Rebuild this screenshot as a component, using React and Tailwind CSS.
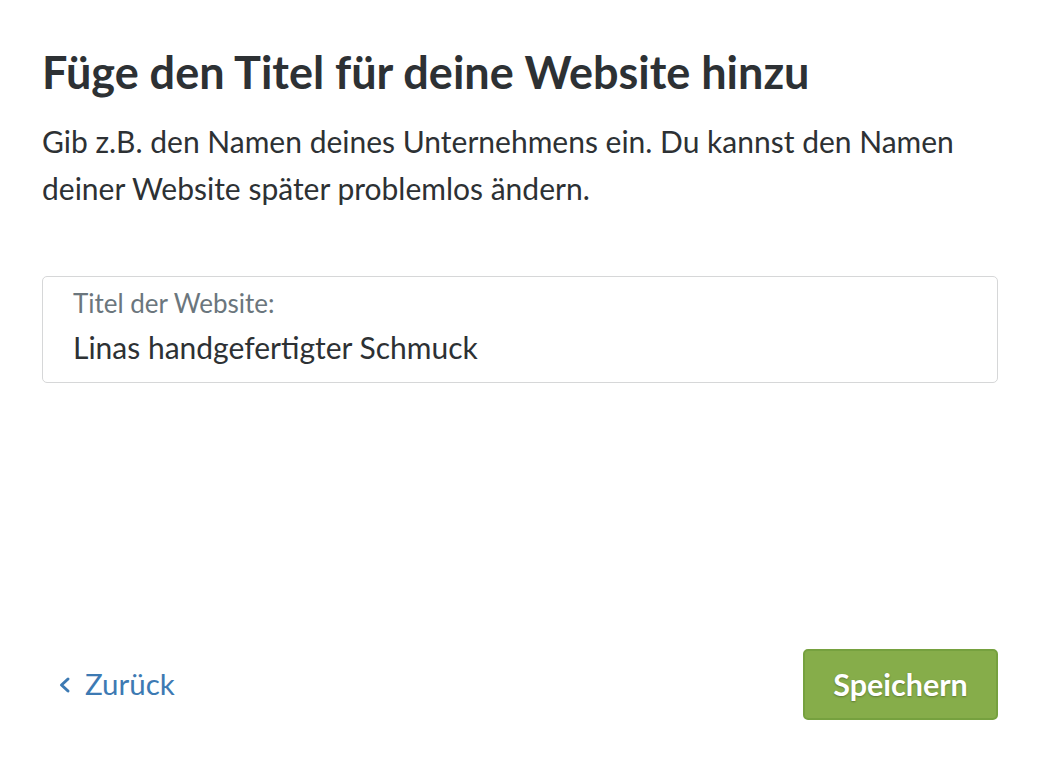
import { useState } from "react";

export default function App() {
  const [title, setTitle] = useState("Linas handgefertigter Schmuck");

  return (
    <div
      className="flex flex-col min-h-[760px] w-full bg-white pl-[42px] pr-[50px] pt-[44px] pb-[40px] text-[#2d3134]"
      style={{ fontFamily: 'Lato, "Liberation Sans", sans-serif' }}
    >
      <h1 className="text-[45px] leading-[56px] font-bold">
        Füge den Titel für deine Website hinzu
      </h1>
      <p className="mt-[18px] text-[30px] leading-[47px]">
        Gib z.B. den Namen deines Unternehmens ein. Du kannst den Namen deiner Website später problemlos ändern.
      </p>

      <label className="mt-[64px] flex flex-col border border-[#d6d7d8] rounded-[5px] px-[30px] pt-[11px] pb-[17px]">
        <span className="text-[26px] leading-[30px] text-[#6b767d]">Titel der Website:</span>
        <input
          value={title}
          onChange={(e) => setTitle(e.target.value)}
          className="mt-[11px] text-[30px] leading-[36px] text-[#2d3134] outline-none bg-transparent"
        />
      </label>

      <div className="flex-1" />

      <div className="flex items-center justify-between">
        <button className="flex items-center gap-[14px] pl-[15px] text-[#3d7ab3] text-[29.5px]">
          <svg width="14" height="18" viewBox="0 0 14 18" fill="none">
            <path d="M11 3L4.5 9L11 15" stroke="currentColor" strokeWidth="3" strokeLinecap="round" strokeLinejoin="round" />
          </svg>
          Zurück
        </button>
        <button className="w-[195px] h-[71px] rounded-[5px] bg-[#86ad4a] border-2 border-[#76a13f] text-white text-[30.5px] font-bold [text-shadow:0_1px_2px_rgba(0,0,0,0.3)]">
          Speichern
        </button>
      </div>
    </div>
  );
}
